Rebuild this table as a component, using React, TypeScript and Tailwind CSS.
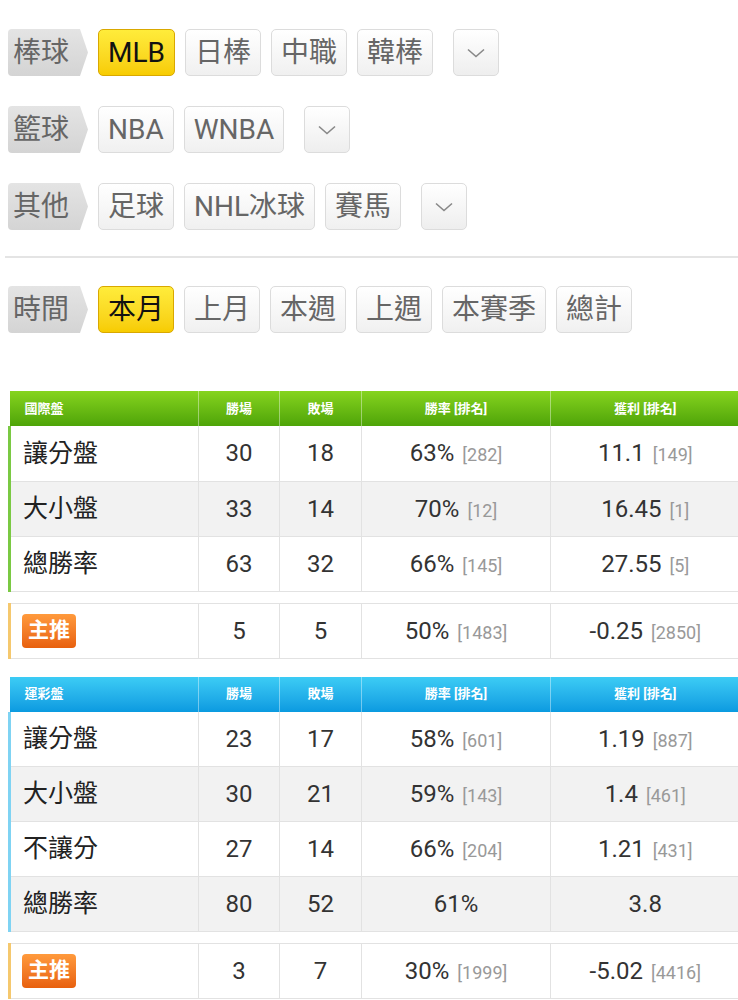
import React from "react";

const font = { fontFamily: '"Roboto", "Noto Sans CJK TC", sans-serif' };

type Row = { name: string; win: string; lose: string; rate: string; rateRank?: string; profit: string; profitRank?: string };

const intl: Row[] = [
  { name: "讓分盤", win: "30", lose: "18", rate: "63%", rateRank: "282", profit: "11.1", profitRank: "149" },
  { name: "大小盤", win: "33", lose: "14", rate: "70%", rateRank: "12", profit: "16.45", profitRank: "1" },
  { name: "總勝率", win: "63", lose: "32", rate: "66%", rateRank: "145", profit: "27.55", profitRank: "5" },
];
const intlPick: Row = { name: "主推", win: "5", lose: "5", rate: "50%", rateRank: "1483", profit: "-0.25", profitRank: "2850" };

const lottery: Row[] = [
  { name: "讓分盤", win: "23", lose: "17", rate: "58%", rateRank: "601", profit: "1.19", profitRank: "887" },
  { name: "大小盤", win: "30", lose: "21", rate: "59%", rateRank: "143", profit: "1.4", profitRank: "461" },
  { name: "不讓分", win: "27", lose: "14", rate: "66%", rateRank: "204", profit: "1.21", profitRank: "431" },
  { name: "總勝率", win: "80", lose: "52", rate: "61%", profit: "3.8" },
];
const lotteryPick: Row = { name: "主推", win: "3", lose: "7", rate: "30%", rateRank: "1999", profit: "-5.02", profitRank: "4416" };

function Label({ text }: { text: string }) {
  return (
    <div className="flex h-[47px] w-[80px] shrink-0 items-center rounded-l-[4px] bg-gradient-to-b from-[#e4e4e4] to-[#d4d4d4] pl-[5px] text-[28px] text-[#666] [clip-path:polygon(0_0,90%_0,100%_50%,90%_100%,0_100%)]">
      {text}
    </div>
  );
}

function Btn({ text, active }: { text: string; active?: boolean }) {
  return (
    <div
      className={
        active
          ? "flex h-[47px] shrink-0 items-center rounded-[5px] border border-[#d9a800] bg-gradient-to-b from-[#ffec3a] to-[#f7cc00] px-[9px] text-[28px] text-[#111]"
          : "flex h-[47px] shrink-0 items-center rounded-[5px] border border-[#dcdcdc] bg-gradient-to-b from-white to-[#f0f0f0] px-[9px] text-[28px] text-[#666]"
      }
    >
      {text}
    </div>
  );
}

function Dropdown() {
  return (
    <div className="ml-[10px] flex h-[47px] w-[46px] shrink-0 items-center justify-center rounded-[5px] border border-[#dcdcdc] bg-gradient-to-b from-white to-[#eeeeee]">
      <svg width="18" height="10" viewBox="0 0 18 10" fill="none">
        <path d="M1 1.5 L9 8.5 L17 1.5" stroke="#888" strokeWidth="1.6" />
      </svg>
    </div>
  );
}

function FilterRow({ label, items, active, dropdown }: { label: string; items: string[]; active?: string; dropdown?: boolean }) {
  return (
    <div className="flex items-center gap-[10px]">
      <Label text={label} />
      {items.map((t) => (
        <Btn key={t} text={t} active={t === active} />
      ))}
      {dropdown && <Dropdown />}
    </div>
  );
}

function Pick() {
  return (
    <span className="inline-flex h-[34px] w-[54px] items-center justify-center rounded-[4px] bg-gradient-to-b from-[#ff9a3c] to-[#e8600c] text-[21px] font-bold text-white">
      主推
    </span>
  );
}

function Cell({ main, rank }: { main: string; rank?: string }) {
  return (
    <td className="border-l border-[#e2e2e2] text-center">
      <span className="text-[24px] text-[#333]">{main}</span>
      {rank && <span className="ml-[8px] text-[18px] text-[#999]">[{rank}]</span>}
    </td>
  );
}

function Cols() {
  return (
    <colgroup>
      <col className="w-[189px]" />
      <col className="w-[81px]" />
      <col className="w-[82px]" />
      <col className="w-[189px]" />
      <col className="w-[189px]" />
    </colgroup>
  );
}

function StatTable({ title, rows, pick, color }: { title: string; rows: Row[]; pick: Row; color: "green" | "blue" }) {
  const head =
    color === "green"
      ? "bg-gradient-to-b from-[#86d41e] to-[#4ea408]"
      : "bg-gradient-to-b from-[#3cccf5] to-[#0a9ae0]";
  const side = color === "green" ? "border-[#7ac943]" : "border-[#7fd3f3]";
  return (
    <div>
      <table className="w-[730px] table-fixed border-collapse">
        <Cols />
        <thead>
          <tr className={`h-[35px] text-[13px] font-bold text-white ${head}`}>
            <th className="pl-[15px] text-left">{title}</th>
            <th className="border-l border-white/40">勝場</th>
            <th className="border-l border-white/40">敗場</th>
            <th className="border-l border-white/40">勝率 [排名]</th>
            <th className="border-l border-white/40">獲利 [排名]</th>
          </tr>
        </thead>
        <tbody>
          {rows.map((r, i) => (
            <tr key={r.name} className={`h-[55px] border-b border-[#e2e2e2] ${i % 2 === 1 ? "bg-[#f2f2f2]" : "bg-white"}`}>
              <td className={`border-l-[3px] ${side} pl-[12px] text-[25px] text-[#222]`}>{r.name}</td>
              <Cell main={r.win} />
              <Cell main={r.lose} />
              <Cell main={r.rate} rank={r.rateRank} />
              <Cell main={r.profit} rank={r.profitRank} />
            </tr>
          ))}
        </tbody>
      </table>
      <table className="mt-[11px] w-[730px] table-fixed border-collapse">
        <Cols />
        <tbody>
          <tr className="h-[55px] border-y border-[#e2e2e2] bg-white">
            <td className="border-l-[3px] border-[#f5c86e] pl-[11px]">
              <Pick />
            </td>
            <Cell main={pick.win} />
            <Cell main={pick.lose} />
            <Cell main={pick.rate} rank={pick.rateRank} />
            <Cell main={pick.profit} rank={pick.profitRank} />
          </tr>
        </tbody>
      </table>
    </div>
  );
}

export default function App() {
  return (
    <div className="h-[1000px] w-[738px] overflow-hidden bg-white" style={font}>
      <div className="flex flex-col gap-[30px] pl-[8px] pt-[29px]">
        <FilterRow label="棒球" items={["MLB", "日棒", "中職", "韓棒"]} active="MLB" dropdown />
        <FilterRow label="籃球" items={["NBA", "WNBA"]} dropdown />
        <FilterRow label="其他" items={["足球", "NHL冰球", "賽馬"]} dropdown />
      </div>
      <div className="ml-[5px] mt-[26px] border-t-2 border-[#e4e4e4]" />
      <div className="pl-[8px] pt-[28px]">
        <FilterRow label="時間" items={["本月", "上月", "本週", "上週", "本賽季", "總計"]} active="本月" />
      </div>
      <div className="flex flex-col gap-[18px] pl-[8px] pt-[58px]">
        <StatTable title="國際盤" rows={intl} pick={intlPick} color="green" />
        <StatTable title="運彩盤" rows={lottery} pick={lotteryPick} color="blue" />
      </div>
    </div>
  );
}
